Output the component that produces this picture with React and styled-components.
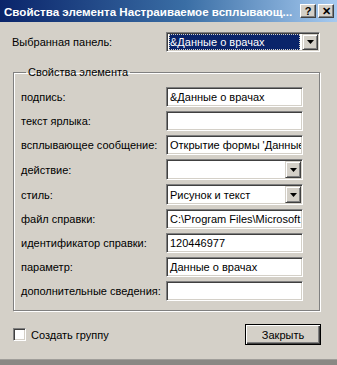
import React from 'react';
import styled, { createGlobalStyle } from 'styled-components';

const Global = createGlobalStyle`
  html, body { margin: 0; padding: 0; background: #d4d0c8; }
  * { box-sizing: border-box; }
`;

const Window = styled.div`
  width: 337px;
  height: 365px;
  background: #d4d0c8;
  font-family: "Liberation Sans", Arial, sans-serif;
  font-size: 11px;
  color: #000;
  display: flex;
  flex-direction: column;
  overflow: hidden;
`;

const TitleBar = styled.div`
  height: 22px;
  flex-shrink: 0;
  display: flex;
  align-items: center;
  padding: 0 3px 0 4px;
  background: linear-gradient(90deg, #0a246a 0%, #3a6ea5 55%, #a6caf0 100%);
`;

const Title = styled.div`
  flex: 1;
  color: #fff;
  font-weight: bold;
  font-size: 11.6px;
  white-space: nowrap;
  overflow: hidden;
`;

const CaptionButton = styled.div`
  width: 16px;
  height: 14px;
  margin-left: ${(p) => (p.gap ? '2px' : '0')};
  background: #d4d0c8;
  border-top: 1px solid #fff;
  border-left: 1px solid #fff;
  border-right: 1px solid #404040;
  border-bottom: 1px solid #404040;
  box-shadow: inset -1px -1px 0 #808080;
  display: flex;
  align-items: center;
  justify-content: center;
  font-weight: bold;
  font-size: 11px;
  line-height: 1;
`;

const Body = styled.div`
  flex: 1;
  display: flex;
  flex-direction: column;
  padding: 10px 17px 0 12px;
`;

const PanelRow = styled.div`
  display: flex;
  align-items: center;
  justify-content: space-between;
  height: 20px;
`;

const Label = styled.span`
  white-space: nowrap;
`;

const Field = styled.div`
  width: ${(p) => p.w || 137}px;
  height: ${(p) => (p.combo ? 21 : 20)}px;
  background: #fff;
  border-style: solid;
  border-width: 1px;
  border-color: #808080 #fff #fff #808080;
  box-shadow: inset 1px 1px 0 #404040, inset -1px -1px 0 #d4d0c8;
  display: flex;
  align-items: center;
  padding: 1px 1px 1px 2px;
  overflow: hidden;
  white-space: nowrap;
`;

const FieldText = styled.span`
  flex: 1;
  min-width: 0;
  overflow: hidden;
  white-space: nowrap;
  height: 100%;
  display: flex;
  align-items: center;
  padding-left: 1px;
  background: ${(p) => (p.selected ? '#0a246a' : 'transparent')};
  color: ${(p) => (p.selected ? '#fff' : '#000')};
  outline: ${(p) => (p.selected ? '1px dotted #d4d0c8' : 'none')};
  outline-offset: -1px;
  margin-right: ${(p) => (p.selected ? '2px' : '0')};
`;

const ArrowButton = styled.div`
  width: 16px;
  height: 100%;
  flex-shrink: 0;
  background: #d4d0c8;
  border-top: 1px solid #d4d0c8;
  border-left: 1px solid #d4d0c8;
  border-right: 1px solid #404040;
  border-bottom: 1px solid #404040;
  box-shadow: inset 1px 1px 0 #fff, inset -1px -1px 0 #808080;
  display: flex;
  align-items: center;
  justify-content: center;
`;

const Arrow = () => (
  <svg width="7" height="4" viewBox="0 0 7 4">
    <path d="M0 0h7L3.5 4z" fill="#000" />
  </svg>
);

const Group = styled.fieldset`
  margin: 14px 0 0 1px;
  padding: 8px 16px 9px 7px;
  border: 1px solid #808080;
  box-shadow: inset 1px 1px 0 #fff, 1px 1px 0 #fff;
  display: flex;
  flex-direction: column;
  gap: 4px;
`;

const Legend = styled.legend`
  padding: 0 2px;
  margin-left: 5px;
  line-height: 13px;
`;

const Row = styled.div`
  display: flex;
  align-items: center;
  justify-content: space-between;
`;

const Footer = styled.div`
  display: flex;
  align-items: center;
  justify-content: space-between;
  margin-top: 13px;
  padding-left: 1px;
`;

const CheckWrap = styled.label`
  display: flex;
  align-items: center;
  gap: 5px;
`;

const Box = styled.span`
  width: 13px;
  height: 13px;
  background: #fff;
  border-style: solid;
  border-width: 1px;
  border-color: #808080 #fff #fff #808080;
  box-shadow: inset 1px 1px 0 #404040, inset -1px -1px 0 #d4d0c8;
`;

const Button = styled.div`
  width: 76px;
  height: 21px;
  margin-right: -1px;
  border: 1px solid #000;
  background: #d4d0c8;
  box-shadow: inset 1px 1px 0 #fff, inset -1px -1px 0 #404040, inset -2px -2px 0 #808080;
  display: flex;
  align-items: center;
  justify-content: center;
`;

const BottomEdge = styled.div`
  height: 6px;
  flex-shrink: 0;
  background: #8a8884;
  border-top: 1px solid #a09e9a;
`;

const rows = [
  { label: 'подпись:', value: '&Данные о врачах' },
  { label: 'текст ярлыка:', value: '' },
  { label: 'всплывающее сообщение:', value: "Открытие формы 'Данные о врачах'" },
  { label: 'действие:', value: '', combo: true },
  { label: 'стиль:', value: 'Рисунок и текст', combo: true },
  { label: 'файл справки:', value: 'C:\\Program Files\\Microsoft Office\\Office\\1049\\Help.chm' },
  { label: 'идентификатор справки:', value: '120446977' },
  { label: 'параметр:', value: 'Данные о врачах' },
  { label: 'дополнительные сведения:', value: '' },
];

export default function App() {
  return (
    <>
      <Global />
      <Window>
        <TitleBar>
          <Title>Свойства элемента Настраиваемое всплывающ...</Title>
          <CaptionButton>?</CaptionButton>
          <CaptionButton gap>✕</CaptionButton>
        </TitleBar>
        <Body>
          <PanelRow>
            <Label>Выбранная панель:</Label>
            <Field w={154}>
              <FieldText selected>&amp;Данные о врачах</FieldText>
              <ArrowButton><Arrow /></ArrowButton>
            </Field>
          </PanelRow>
          <Group>
            <Legend>Свойства элемента</Legend>
            {rows.map((r) => (
              <Row key={r.label}>
                <Label>{r.label}</Label>
                <Field combo={r.combo}>
                  <FieldText>{r.value}</FieldText>
                  {r.combo && <ArrowButton><Arrow /></ArrowButton>}
                </Field>
              </Row>
            ))}
          </Group>
          <Footer>
            <CheckWrap>
              <Box />
              <span>Создать группу</span>
            </CheckWrap>
            <Button>Закрыть</Button>
          </Footer>
        </Body>
        <BottomEdge />
      </Window>
    </>
  );
}
